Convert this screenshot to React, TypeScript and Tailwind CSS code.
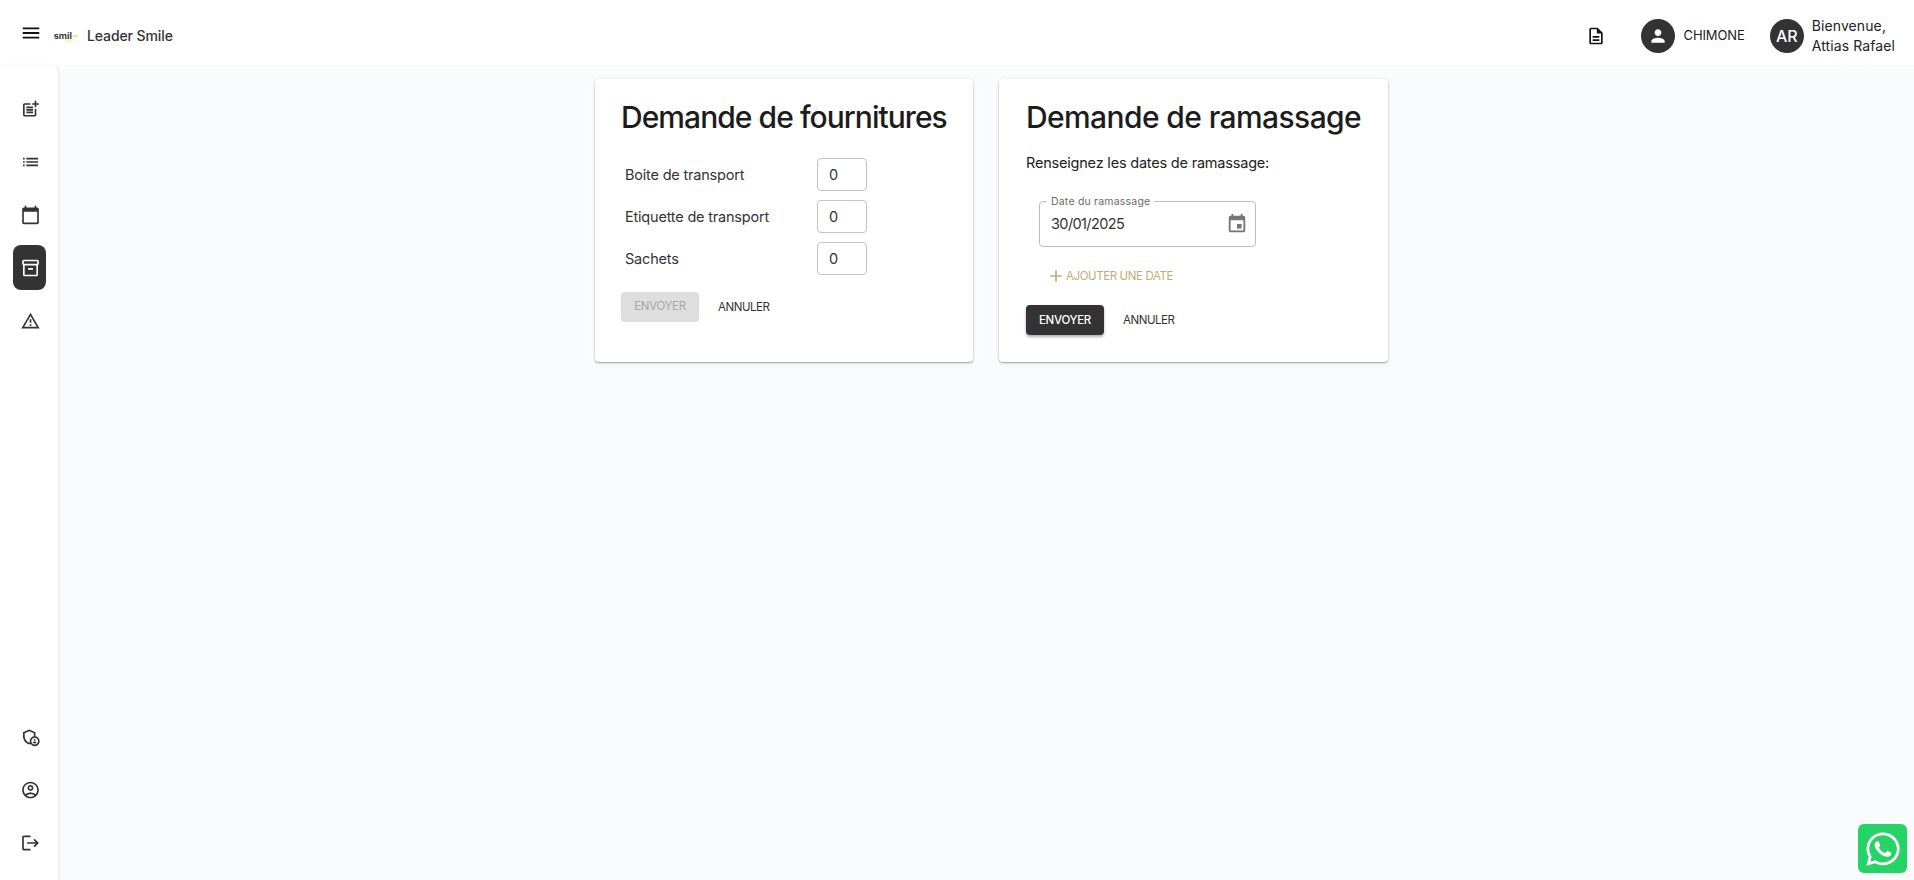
import React from "react"
import { FaWhatsapp } from "react-icons/fa"

const font = "font-['Inter','Liberation_Sans',sans-serif]"

function Icon({ d, className = "w-6 h-6" }: { d: string; className?: string }) {
    return (
        <svg viewBox="0 0 24 24" className={className} fill="currentColor">
            <path d={d} />
        </svg>
    )
}

const icons = {
    menu: "M3 18h18v-2H3v2zm0-5h18v-2H3v2zm0-7v2h18V6H3z",
    postAdd: "M17 19.22H5V7h7V5H5c-1.1 0-2 .9-2 2v12c0 1.1.9 2 2 2h12c1.1 0 2-.9 2-2v-7h-2v7.22zM19 2h-2v3h-3c.01.01 0 2 0 2h3v2.99c.01.01 2 0 2 0V7h3V5h-3V2zM7 9h8v2H7zM7 12v2h8v-2h-3zM7 15h8v2H7z",
    list: "M3 13h2v-2H3v2zm0 4h2v-2H3v2zm0-8h2V7H3v2zm4 4h14v-2H7v2zm0 4h14v-2H7v2zM7 7v2h14V7H7z",
    calendar: "M20 3h-1V1h-2v2H7V1H5v2H4c-1.1 0-2 .9-2 2v16c0 1.1.9 2 2 2h16c1.1 0 2-.9 2-2V5c0-1.1-.9-2-2-2zm0 18H4V8h16v13z",
    inventory: "M20 2H4c-1 0-2 .9-2 2v3.01c0 .72.43 1.34 1 1.69V20c0 1.1 1.1 2 2 2h14c.9 0 2-.9 2-2V8.7c.57-.35 1-.97 1-1.69V4c0-1.1-1-2-2-2zm-1 18H5V9h14v11zm1-13H4V4h16v3zM9 12h6v2H9z",
    warning: "M12 5.99 19.53 19H4.47L12 5.99M12 2 1 21h22L12 2zm1 14h-2v2h2v-2zm0-6h-2v4h2v-4z",
    admin: "M17 14.38c.62 0 1.12.5 1.12 1.12s-.5 1.12-1.12 1.12-1.12-.5-1.12-1.12.5-1.12 1.12-1.12zM17 17.5c-.73 0-2.19.36-2.24 1.08.5.71 1.32 1.17 2.24 1.17s1.74-.46 2.24-1.17c-.05-.72-1.51-1.08-2.24-1.08zM18 11.09V6.27L10.5 3 3 6.27v4.91c0 4.54 3.2 8.79 7.5 9.82.55-.13 1.08-.32 1.6-.55C13.18 21.99 15 23 17 23c3.31 0 6-2.69 6-6 0-2.97-2.16-5.43-5-5.91zM11 17c0 .56.08 1.11.23 1.62-.24.11-.48.22-.73.3-3.17-1-5.5-4.24-5.5-7.74v-3.6l5.5-2.4 5.5 2.4v3.51c-2.84.48-5 2.94-5 5.91zm6 4c-2.21 0-4-1.79-4-4s1.79-4 4-4 4 1.79 4 4-1.79 4-4 4z",
    account: "M12 2C6.48 2 2 6.48 2 12s4.48 10 10 10 10-4.48 10-10S17.52 2 12 2zM7.35 18.5C8.66 17.56 10.26 17 12 17s3.34.56 4.65 1.5c-1.31.94-2.91 1.5-4.65 1.5s-3.34-.56-4.65-1.5zm10.79-1.38C16.45 15.8 14.32 15 12 15s-4.45.8-6.14 2.12C4.7 15.73 4 13.95 4 12c0-4.42 3.58-8 8-8s8 3.58 8 8c0 1.95-.7 3.73-1.86 5.12zM12 6c-1.93 0-3.5 1.57-3.5 3.5S10.07 13 12 13s3.5-1.57 3.5-3.5S13.93 6 12 6zm0 5c-.83 0-1.5-.67-1.5-1.5S11.17 8 12 8s1.5.67 1.5 1.5S12.83 11 12 11z",
    logout: "M17 7l-1.41 1.41L18.17 11H8v2h10.17l-2.58 2.58L17 17l5-5zM4 5h8V3H4c-1.1 0-2 .9-2 2v14c0 1.1.9 2 2 2h8v-2H4V5z",
    doc: "M8 16h8v2H8zm0-4h8v2H8zm6-10H6c-1.1 0-2 .9-2 2v16c0 1.1.89 2 1.99 2H18c1.1 0 2-.9 2-2V8l-6-6zm4 18H6V4h7v5h5v11z",
    person: "M12 12c2.21 0 4-1.79 4-4s-1.79-4-4-4-4 1.79-4 4 1.79 4 4 4zm0 2c-2.67 0-8 1.34-8 4v2h16v-2c0-2.66-5.33-4-8-4z",
    event: "M17 12h-5v5h5v-5zM16 1v2H8V1H6v2H5c-1.11 0-1.99.9-1.99 2L3 19c0 1.1.89 2 2 2h14c1.1 0 2-.9 2-2V5c0-1.1-.9-2-2-2h-1V1h-2zm3 18H5V8h14v11z",
    add: "M19 13h-6v6h-2v-6H5v-2h6V5h2v6h6v2z",
}

const topNav = [icons.postAdd, icons.list, icons.calendar, icons.inventory, icons.warning]
const bottomNav = [icons.admin, icons.account, icons.logout]
const fournitures = ["Boite de transport", "Etiquette de transport", "Sachets"]

function NavItem({ d, active }: { d: string; active?: boolean }) {
    return (
        <div className={`flex h-[45px] w-[33px] items-center justify-center rounded-lg ${active ? "bg-[#333333] text-white" : "text-[#333333]"}`}>
            <Icon d={d} className="h-5 w-5 translate-x-[1.5px]" />
        </div>
    )
}

function Card({ className, children }: { className: string; children: React.ReactNode }) {
    return (
        <section className={`h-[283px] rounded bg-white shadow-[0_1px_2px_rgba(0,0,0,0.35),0_0_6px_rgba(0,0,0,0.05)] ${className}`}>
            {children}
        </section>
    )
}

export default function App() {
    return (
        <div className={`flex h-[880px] flex-col overflow-hidden bg-[#fafbfd] text-[#222222] ${font}`}>
            <header className="flex h-[65px] shrink-0 items-center bg-white pt-[6px] pl-[20px] pr-[19px]">
                <Icon d={icons.menu} className="h-[22px] w-[22px] -translate-y-[3px] text-[#111111]" />
                <div className="relative ml-[12px] flex w-[24px] flex-col items-center">
                    <span className="text-[9px] leading-[9px] font-bold tracking-[0.1px] whitespace-nowrap text-[#333333]">
                        smil<span className="text-[#f2d94e]">~</span>
                    </span>
                    <svg viewBox="0 0 12 4" className="absolute top-[8px] left-[10px] h-[4px] w-[10px] text-[#f2e66a]" fill="none" stroke="currentColor" strokeWidth="1">
                        <path d="M1 0.5 Q6 5 11 0.5" />
                    </svg>
                </div>
                <span className="ml-[9px] text-[14px] font-medium tracking-[-0.1px] text-[#333333]">Leader Smile</span>

                <div className="ml-auto flex items-center">
                    <Icon d={icons.doc} className="h-5 w-5 text-[#111111]" />
                    <div className="ml-[35px] flex h-[34px] w-[34px] items-center justify-center rounded-full bg-[#333333] text-white">
                        <Icon d={icons.person} className="h-5 w-5" />
                    </div>
                    <span className="ml-[8px] text-[13px] tracking-[-0.1px] text-[#222222]">CHIMONE</span>
                    <div className="ml-[25px] flex h-[34px] w-[34px] items-center justify-center rounded-full bg-[#333333] text-[16px] font-medium text-white">AR</div>
                    <div className="ml-[8px] text-[14px] leading-[20px] tracking-[0.1px] text-[#222222]">
                        <div>Bienvenue,</div>
                        <div>Attias Rafael</div>
                    </div>
                </div>
            </header>

            <div className="flex min-h-0 flex-1">
                <aside className="flex w-[59px] shrink-0 flex-col items-center justify-between rounded-tr-lg border-r border-[#eeeeee] bg-white pt-[21px] pb-[15px] shadow-[1px_0_3px_rgba(0,0,0,0.06)]">
                    <nav className="flex flex-col items-center gap-2">
                        {topNav.map((d, i) => (
                            <NavItem key={i} d={d} active={i === 3} />
                        ))}
                    </nav>
                    <nav className="flex flex-col items-center gap-2">
                        {bottomNav.map((d, i) => (
                            <NavItem key={i} d={d} />
                        ))}
                    </nav>
                </aside>

                <main className="flex min-w-0 flex-1 items-start gap-[26px] pl-[536px] pt-[14px]">
                    <Card className="w-[378px] px-[26px] pt-[19px]">
                        <h2 className="text-[30px] leading-[38px] font-medium tracking-[-0.95px] whitespace-nowrap text-[#1c1c1c]">Demande de fournitures</h2>
                        <div className="mt-[22px] flex flex-col gap-[9px]">
                            {fournitures.map((label) => (
                                <div key={label} className="flex h-[33px] items-center pl-1">
                                    <span className="w-[192px] text-[14.5px] tracking-[-0.2px] text-[#333333]">{label}</span>
                                    <div className="flex h-[33px] w-[50px] items-center rounded border border-[#c4c4c4] pl-[11px] text-[14.5px] text-[#333333]">0</div>
                                </div>
                            ))}
                        </div>
                        <div className="mt-[17px] flex items-center">
                            <button className="h-[30px] w-[78px] rounded bg-[#dedede] text-[11.5px] tracking-[-0.3px] text-[#a6a6a6]">ENVOYER</button>
                            <button className="ml-[19px] pt-[2px] text-[11.5px] tracking-[-0.45px] text-[#333333]">ANNULER</button>
                        </div>
                    </Card>

                    <Card className="w-[389px] px-[27px] pt-[19px]">
                        <h2 className="text-[30px] leading-[38px] font-medium tracking-[-0.6px] whitespace-nowrap text-[#1c1c1c]">Demande de ramassage</h2>
                        <p className="mt-[17px] text-[14.5px] leading-[20px] tracking-[-0.2px] text-[#222222]">Renseignez les dates de ramassage:</p>
                        <div className="relative mt-[28px] ml-[13px] flex h-[46px] w-[217px] items-center justify-between rounded border border-[#bdbdbd] pl-[11px] pr-[7px]">
                            <span className="absolute -top-[7px] left-[7px] bg-white px-[4px] text-[10.5px] leading-[13px] tracking-[0.2px] text-[#6b6b6b]">Date du ramassage</span>
                            <span className="text-[14.5px] tracking-[-0.6px] text-[#333333]">30/01/2025</span>
                            <Icon d={icons.event} className="h-[22px] w-[22px] text-[#757575]" />
                        </div>
                        <div className="mt-[19px] ml-[20px] flex h-5 items-center text-[#bfae77]">
                            <Icon d={icons.add} className="h-5 w-5" />
                            <span className="pt-[2px] text-[11.5px] tracking-[-0.4px]">AJOUTER UNE DATE</span>
                        </div>
                        <div className="mt-[19px] flex items-center">
                            <button className="h-[30px] w-[78px] rounded bg-[#333333] pt-[2px] text-[11.5px] font-medium tracking-[-0.3px] text-white shadow-[0_2px_3px_rgba(0,0,0,0.3)]">ENVOYER</button>
                            <button className="ml-[19px] pt-[2px] text-[11.5px] tracking-[-0.45px] text-[#333333]">ANNULER</button>
                        </div>
                    </Card>
                </main>
            </div>

            <a className="fixed right-[7px] bottom-[7px] flex h-[49px] w-[49px] items-center justify-center rounded-md bg-[#25d366] text-white">
                <FaWhatsapp className="h-[38px] w-[38px]" />
            </a>
        </div>
    )
}
